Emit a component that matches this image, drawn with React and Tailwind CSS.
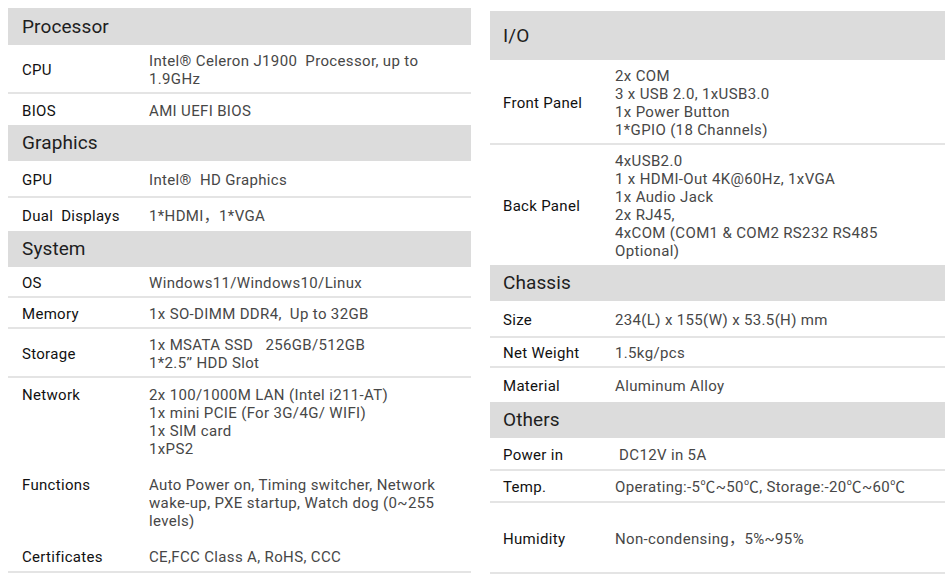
import React from "react";

// spec tables — left & right columns
const left = [
  { head: "Processor", h: "h-[37px]", pt: "mt-[8px]" },
  { label: "CPU", value: ["Intel® Celeron J1900  Processor, up to", "1.9GHz"], h: "h-[49px]", line: true },
  { label: "BIOS", value: ["AMI UEFI BIOS"], h: "h-[31px]" },
  { head: "Graphics", h: "h-[36px]" },
  { label: "GPU", value: ["Intel®  HD Graphics"], h: "h-[37px]", line: true },
  { label: "Dual  Displays", value: ["1*HDMI，1*VGA"], h: "h-[33px]" },
  { head: "System", h: "h-[36px]" },
  { label: "OS", value: ["Windows11/Windows10/Linux"], h: "h-[31px]", line: true },
  { label: "Memory", value: ["1x SO-DIMM DDR4,  Up to 32GB"], h: "h-[31px]", line: true },
  { label: "Storage", value: ["1x MSATA SSD   256GB/512GB", "1*2.5’’ HDD Slot"], h: "h-[49px]", line: true },
  { label: "Network", value: ["2x 100/1000M LAN (Intel i211-AT)", "1x mini PCIE (For 3G/4G/ WIFI)", "1x SIM card", "1xPS2"], h: "h-[88px]", top: "pt-[8px]" },
  { label: "Functions", value: ["Auto Power on, Timing switcher, Network", "wake-up, PXE startup, Watch dog (0~255", "levels)"], h: "h-[74px]", top: "pt-[10px]" },
  { label: "Certificates", value: ["CE,FCC Class A, RoHS, CCC"], h: "h-[33px]", line: true },
];

const right = [
  { head: "I/O", h: "h-[49px]", pt: "mt-[11px]" },
  { label: "Front Panel", value: ["2x COM", "3 x USB 2.0, 1xUSB3.0", "1x Power Button", "1*GPIO (18 Channels)"], h: "h-[85px]", line: true },
  { label: "Back Panel", value: ["4xUSB2.0", "1 x HDMI-Out 4K@60Hz, 1xVGA", "1x Audio Jack", "2x RJ45,", "4xCOM (COM1 & COM2 RS232 RS485", "Optional)"], h: "h-[120px]" },
  { head: "Chassis", h: "h-[36px]" },
  { label: "Size", value: ["234(L) x 155(W) x 53.5(H) mm"], h: "h-[37px]", line: true },
  { label: "Net Weight", value: ["1.5kg/pcs"], h: "h-[30px]", line: true },
  { label: "Material", value: ["Aluminum Alloy"], h: "h-[34px]" },
  { head: "Others", h: "h-[36px]" },
  { label: "Power in", value: [" DC12V in 5A"], h: "h-[33px]", line: true },
  { label: "Temp.", value: ["Operating:-5℃~50℃, Storage:-20℃~60℃"], h: "h-[32px]", line: true },
  { label: "Humidity", value: ["Non-condensing，5%~95%"], h: "h-[71px]", line: true },
];

const Table = ({ rows, labelW, padL }) => (
  <div className="flex flex-col">
    {rows.map((r, i) =>
      r.head ? (
        <div
          key={i}
          className={`${r.h} ${r.pt || ""} bg-[#dcdcdc] flex items-center ${padL} pt-[1px] text-[19px] tracking-[0.1px] text-[#1e1e1e]`}
        >
          {r.head}
        </div>
      ) : (
        <div
          key={i}
          className={`${r.h} flex ${r.top ? "items-start " + r.top : "items-center pt-[2px]"} ${padL} ${
            r.line ? "border-b-2 border-[#e4e4e4]" : ""
          }`}
        >
          <div className={`${labelW} shrink-0 text-[15px] leading-[18px] tracking-[0.3px] text-[#111] whitespace-pre`}>{r.label}</div>
          <div className="text-[15px] leading-[18px] tracking-[0.35px] text-[#474747] whitespace-pre">
            {r.value.map((v, j) => (
              <div key={j}>{v}</div>
            ))}
          </div>
        </div>
      )
    )}
  </div>
);

export default function App() {
  return (
    <div
      className="w-[952px] h-[579px] bg-white flex pl-[8px] gap-[19px] overflow-hidden"
      style={{ fontFamily: 'Roboto, "Noto Sans CJK SC", sans-serif' }}
    >
      <div className="w-[463px]">
        <Table rows={left} labelW="w-[127px]" padL="pl-[14px]" />
      </div>
      <div className="w-[455px]">
        <Table rows={right} labelW="w-[112px]" padL="pl-[13px]" />
      </div>
    </div>
  );
}
